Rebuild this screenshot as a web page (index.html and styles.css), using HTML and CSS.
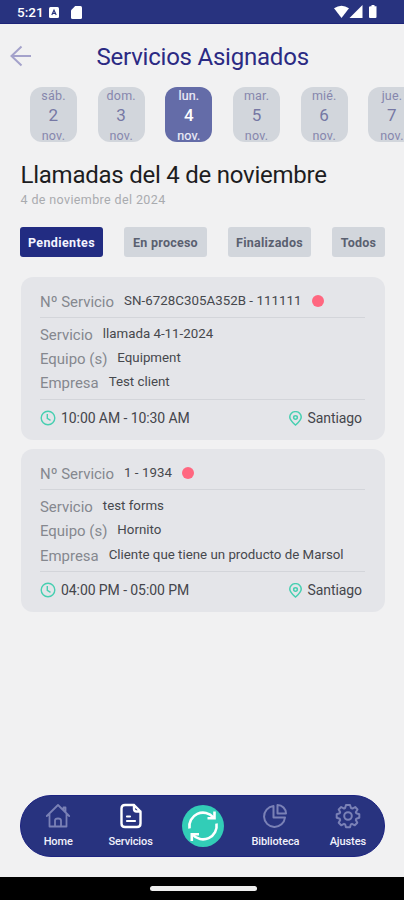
FILE: index.html
```html
<!DOCTYPE html>
<html lang="es">
<head>
<meta charset="utf-8">
<title>Servicios Asignados</title>
<link rel="stylesheet" href="styles.css">
</head>
<body>
<div class="phone">
  <div class="status">
    <span class="clock">5:21</span>
    <svg class="st-a" width="10" height="11" viewBox="0 0 10 11"><rect width="10" height="11" rx="1.5" fill="#fff"/><path d="M2.8 8 5 3l2.2 5M3.6 6.4h2.8" fill="none" stroke="#28337f" stroke-width="1.1"/></svg>
    <svg class="st-sd" width="11" height="13" viewBox="0 0 11 13"><path d="M4.2 0H9.5Q11 0 11 1.500V11.500Q11 13 9.500 13H1.500Q0 13 0 11.500V4.300Z" fill="#fff"/></svg>
    <span class="grow"></span>
    <svg width="43" height="14" viewBox="0 0 43 14" fill="#fff"><path d="M0 3.300Q7.500-1.700 15 3.300L7.500 13Z"/><path d="M28.500 0V13H15.500Z"/><path d="M36.500 1.200h1V0h3v1.200H42.500V12q0 1-1 1h-5.500q-1 0-1-1V2.200q0-1 1.500-1Z"/></svg>
  </div>
  <header class="top">
    <svg class="back" width="22" height="22" viewBox="0 0 22 22"><path d="M11.500 1.500 1.500 11l10 9.500M1.500 11H21" fill="none" stroke="#a4a2cb" stroke-width="2"/></svg>
    <h1>Servicios Asignados</h1>
  </header>
  <div class="days">
    <div class="day"><span>sáb.</span><b>2</b><span>nov.</span></div>
    <div class="day"><span>dom.</span><b>3</b><span>nov.</span></div>
    <div class="day on"><span>lun.</span><b>4</b><span>nov.</span></div>
    <div class="day"><span>mar.</span><b>5</b><span>nov.</span></div>
    <div class="day"><span>mié.</span><b>6</b><span>nov.</span></div>
    <div class="day"><span>jue.</span><b>7</b><span>nov.</span></div>
  </div>
  <h2>Llamadas del 4 de noviembre</h2>
  <p class="date">4 de noviembre del 2024</p>
  <div class="tabs">
    <div class="tab on">Pendientes</div>
    <div class="tab">En proceso</div>
    <div class="tab">Finalizados</div>
    <div class="tab t4">Todos</div>
  </div>
  <section class="card">
    <div class="row first"><span class="lab">Nº Servicio</span><span class="val">SN-6728C305A352B - 111111</span><i class="dot"></i></div>
    <div class="mid">
      <div class="row"><span class="lab">Servicio</span><span class="val">llamada 4-11-2024</span></div>
      <div class="row"><span class="lab">Equipo (s)</span><span class="val">Equipment</span></div>
      <div class="row"><span class="lab">Empresa</span><span class="val">Test client</span></div>
    </div>
    <div class="foot">
      <svg width="16" height="16" viewBox="0 0 16 16" fill="none" stroke="#47cfb1" stroke-width="1.400"><circle cx="8" cy="8" r="6.800"/><path d="M7.300 4v4.300l3.200 2"/></svg>
      <span class="time">10:00 AM - 10:30 AM</span>
      <svg class="pin" width="13" height="15" viewBox="0 0 12 15" preserveAspectRatio="none" fill="none" stroke="#47cfb1" stroke-width="1.400"><path d="M6 14C3.500 11.500.7 9 .7 5.900a5.300 5.300 0 0 1 10.600 0C11.300 9 8.500 11.500 6 14Z"/><circle cx="6" cy="6.500" r="1.700"/></svg>
      <span class="city">Santiago</span>
    </div>
  </section>
  <section class="card">
    <div class="row first"><span class="lab">Nº Servicio</span><span class="val">1 - 1934</span><i class="dot"></i></div>
    <div class="mid">
      <div class="row"><span class="lab">Servicio</span><span class="val">test forms</span></div>
      <div class="row"><span class="lab">Equipo (s)</span><span class="val">Hornito</span></div>
      <div class="row"><span class="lab">Empresa</span><span class="val">Cliente que tiene un producto de Marsol</span></div>
    </div>
    <div class="foot">
      <svg width="16" height="16" viewBox="0 0 16 16" fill="none" stroke="#47cfb1" stroke-width="1.400"><circle cx="8" cy="8" r="6.800"/><path d="M7.300 4v4.300l3.200 2"/></svg>
      <span class="time">04:00 PM - 05:00 PM</span>
      <svg class="pin" width="13" height="15" viewBox="0 0 12 15" preserveAspectRatio="none" fill="none" stroke="#47cfb1" stroke-width="1.400"><path d="M6 14C3.500 11.500.7 9 .7 5.900a5.300 5.300 0 0 1 10.600 0C11.300 9 8.500 11.500 6 14Z"/><circle cx="6" cy="6.500" r="1.700"/></svg>
      <span class="city">Santiago</span>
    </div>
  </section>
  <nav class="nav">
    <div class="item">
      <svg width="26" height="26" viewBox="0 0 26 26" fill="none" stroke="#7a81b6" stroke-width="1.800" stroke-linejoin="round" stroke-linecap="round"><path d="M1.800 13 13 2l11.200 11M4.500 11V23.500H21.500V11M18.500 7V4.500H20.500V9M10 23V17.500Q10 15.500 13 15.500T16 17.500V23"/></svg>
      <span>Home</span>
    </div>
    <div class="item">
      <svg width="26" height="26" viewBox="0 0 26 26" fill="none" stroke="#fff" stroke-width="2.400" stroke-linejoin="round" stroke-linecap="round"><path d="M16 2H7Q3.500 2 3.500 5.500V20.500Q3.500 24 7 24H19Q22.500 24 22.500 20.500V8.500ZM16 2V6Q16 8.500 18.500 8.500H22.500"/><path d="M9 13.500h3M9 18h8" stroke-width="2.200"/></svg>
      <span>Servicios</span>
    </div>
    <div class="sync">
      <svg width="42" height="42" viewBox="0 0 42 42"><circle cx="21" cy="21" r="21" fill="#32cdb7"/><g fill="none" stroke="#fff" stroke-width="2.600"><path d="M7.500 23.500A13.700 13.700 0 0 1 31.500 12.500M34.500 18.500A13.700 13.700 0 0 1 10.500 29.500"/><path d="M32.500 6.500V13.200H25.500M9.800 36V29.300H17"/></g></svg>
    </div>
    <div class="item">
      <svg width="26" height="26" viewBox="0 0 26 26" fill="none" stroke="#7a81b6" stroke-width="2" stroke-linejoin="round"><path d="M11.500 3A10.500 10.500 0 1 0 23 14.500H11.500Z"/><path d="M15.500 2V10.500H24A8.500 8.500 0 0 0 15.500 2Z"/></svg>
      <span>Biblioteca</span>
    </div>
    <div class="item">
      <svg width="26" height="26" viewBox="0 0 26 26" fill="none" stroke="#7a81b6" stroke-width="2" stroke-linejoin="round"><path d="M11 2h4l1 3 1.500.6L20.200 4 22.500 6.500 20.800 9.200 21.300 10.300 24.300 11.200V14.800L21.300 15.700 20.800 17 22.300 19.800 19.800 22.300 17 20.800 15.900 21.300 15 24.300H11L10.100 21.300 9 20.800 6.200 22.300 3.700 19.800 5.200 17 4.700 15.700 1.700 14.800V11.200L4.700 10.300 5.200 9.200 3.700 6.500 6.200 4 9 5.600 10.100 5Z"/><circle cx="13" cy="13" r="3.800"/></svg>
      <span>Ajustes</span>
    </div>
  </nav>
  <div class="sys"><i></i></div>
</div>
</body>
</html>
```
FILE: styles.css
```css
* { box-sizing: border-box; }
body { margin: 0; background: #f1f1f2; font-family: Roboto, sans-serif; }
.phone { width: 404px; height: 900px; overflow: hidden; display: flex; flex-direction: column; background: #f1f1f2; }
svg { display: block; flex: none; }
.status { height: 24px; flex: none; background: #28337f; border-bottom: 1px solid #1d2478; display: flex; align-items: center; padding: 1px 27px 0 17px; color: #fff; }
.clock { font-size: 13.500px; font-weight: 500; width: 32px; }
.st-sd { margin-left: 12px; }
.grow { flex: 1; }
.top { height: 63px; flex: none; display: flex; align-items: center; padding-left: 10px; }
.back { margin-top: 1px; }
h1 { margin: 2px 0 0 64.500px; font-size: 24px; line-height: 28px; font-weight: 400; color: #2b2a83; letter-spacing: -.22px; white-space: nowrap; }
.days { display: flex; flex: none; gap: 20.700px; margin-left: 30px; height: 55px; }
.day { width: 47px; height: 55px; flex: none; border-radius: 12px; background: #d2d6dc; color: #8686ad; display: flex; flex-direction: column; align-items: center; overflow: hidden; font-size: 12.500px; line-height: 17px; letter-spacing: .2px; }
.day b { font-size: 17px; line-height: 23px; font-weight: 400; color: #7678a4; }
.day.on { background: #646ca8; color: #eeeef8; }
.day.on span { -webkit-text-stroke: .2px; }
.day.on b { color: #fff; font-weight: 500; }
h2 { margin: 18px 0 0 20.500px; font-size: 24px; line-height: 30px; font-weight: 400; color: #1d1d1f; letter-spacing: -.24px; white-space: nowrap; }
.date { margin: 2px 0 0 20.500px; font-size: 12.500px; line-height: 16px; letter-spacing: .38px; color: #a9abaf; white-space: nowrap; }
.tabs { display: flex; flex: none; justify-content: space-between; margin: 19px 19px 0 20px; height: 30px; }
.tab { width: 83px; border-radius: 3px; background: #d2d6dc; color: #5a6070; font-size: 12.500px; font-weight: 700; line-height: 32px; letter-spacing: .25px; text-align: center; white-space: nowrap; }
.t4 { width: 53px; }
.tab.on { background: #222c82; color: #f4f4ff; letter-spacing: .38px; }
.card { margin: 9px 19px 0 20.500px; height: 163.300px; flex: none; border-radius: 12px; background: #e4e5e9; padding: 0 20px 0 19.500px; }
.tabs + .card { margin-top: 19.500px; }
.row { display: flex; align-items: center; height: 24.300px; white-space: nowrap; }
.lab { font-size: 14.950px; color: #85888f; flex: none; }
.val { font-size: 13.300px; color: #46484d; position: relative; top: -1.500px; margin-left: 10px; }
.first { height: 41px; padding-top: 11px; border-bottom: 1px solid #d3d5da; }
.first .val { letter-spacing: .04px; }
.dot { width: 12px; height: 12px; border-radius: 50%; background: #ff6780; margin: -2px 0 0 10px; }
.mid { height: 82px; padding-top: 5px; border-bottom: 1px solid #d3d5da; }
.foot { height: 37px; display: flex; align-items: center; color: #44464c; font-size: 14px; letter-spacing: -.08px; }
.time { margin-left: 5px; }
.pin { margin-left: auto; }
.city { margin: 0 3px 0 6px; }
.nav { margin: auto 19px 20px 20px; height: 62px; flex: none; border-radius: 31px; background: #28337f; border: 1px solid #1c2381; display: flex; align-items: center; padding-left: 1px; }
.item { flex: 1; height: 60px; padding-top: 7px; display: flex; flex-direction: column; align-items: center; color: #f1f1fb; font-size: 11px; font-weight: 500; line-height: 14px; }
.item span { margin-top: 6px; letter-spacing: -.1px; }
.sync { flex: 1; display: flex; justify-content: center; }
.sys { height: 23px; flex: none; background: #000; display: flex; justify-content: center; padding: 9px 0 0 2px; }
.sys i { width: 107px; height: 5px; border-radius: 3px; background: #eee; }
```
